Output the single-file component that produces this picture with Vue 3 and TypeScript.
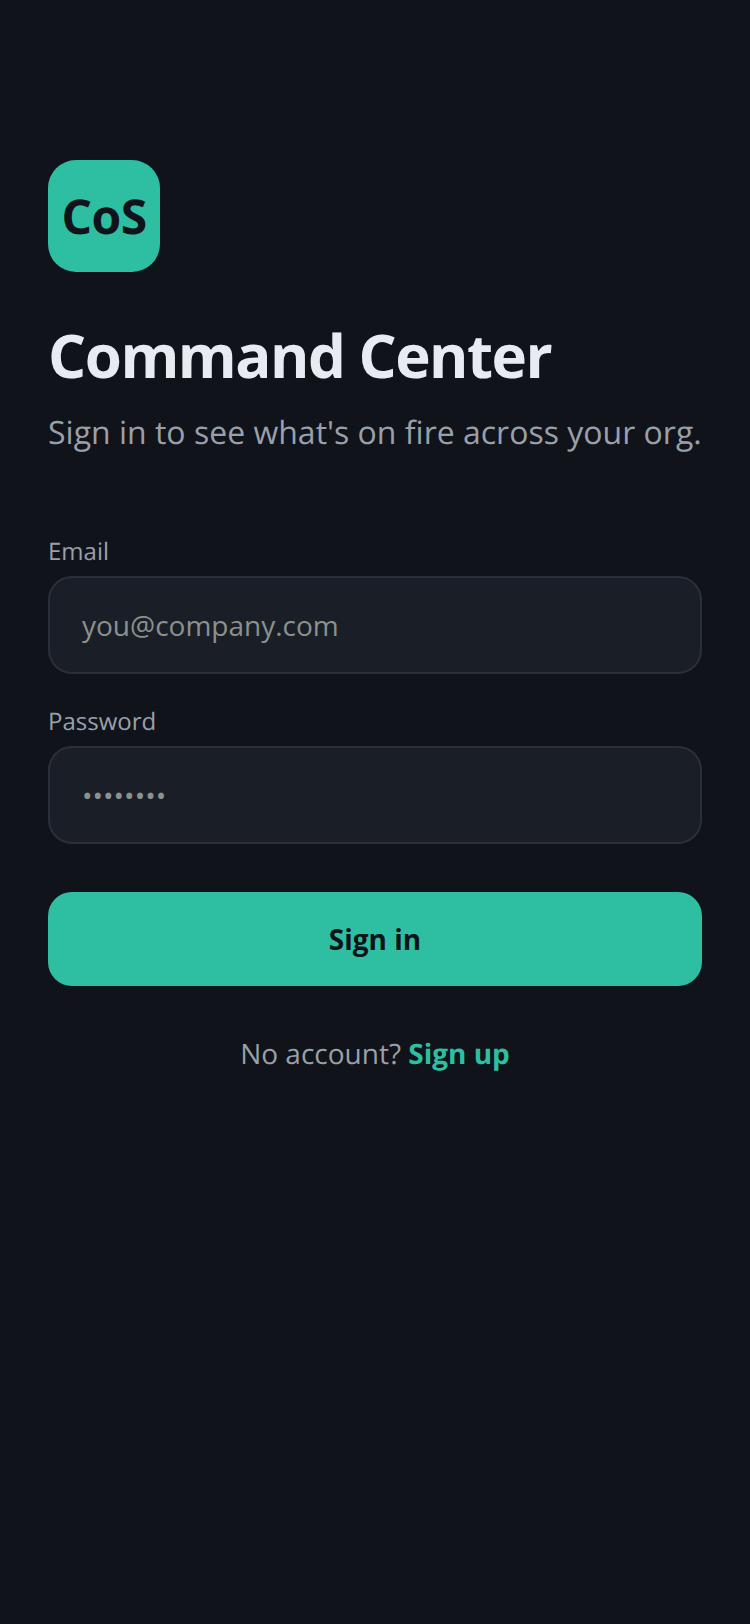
<template>
  <main class="login">
    <div class="logo">CoS</div>
    <h1 class="title">Command Center</h1>
    <p class="subtitle">Sign in to see what's on fire across your org.</p>

    <form class="form" @submit.prevent>
      <label class="field">
        <span class="field-label">Email</span>
        <input class="input" type="email" placeholder="you@company.com" />
      </label>
      <label class="field">
        <span class="field-label">Password</span>
        <input class="input" type="password" placeholder="••••••••" />
      </label>
      <button class="submit" type="submit">Sign in</button>
    </form>

    <p class="switch">No account? <a class="switch-link" href="#">Sign up</a></p>
  </main>
</template>

<script setup lang="ts">
</script>

<style>
html,
body {
  margin: 0;
  background: #10131a;
}
</style>

<style scoped>
.login {
  box-sizing: border-box;
  display: flex;
  flex-direction: column;
  min-height: 1624px;
  padding: 160px 48px 0;
  background: #10131a;
  font-family: "Open Sans", sans-serif;
  text-rendering: geometricPrecision;
}

.logo {
  display: flex;
  align-items: center;
  justify-content: center;
  width: 112px;
  height: 112px;
  border-radius: 28px;
  background: #2ebfa2;
  color: #10131a;
  font-size: 48px;
  font-weight: 700;
  letter-spacing: -0.5px;
}

.title {
  margin: 47px 0 0;
  color: #e8ebf1;
  font-size: 60px;
  font-weight: 700;
  letter-spacing: -1.5px;
  line-height: 72px;
}

.subtitle {
  margin: 20px 0 0;
  color: #9aa0aa;
  font-size: 32px;
  line-height: 44px;
  white-space: nowrap;
}

.form {
  display: flex;
  flex-direction: column;
  margin-top: 81px;
}

.field {
  display: flex;
  flex-direction: column;
  gap: 8px;
  margin-bottom: 32px;
}

.field-label {
  color: #9aa0aa;
  font-size: 24px;
  line-height: 32px;
}

.input {
  box-sizing: border-box;
  width: 100%;
  height: 98px;
  padding: 0 32px;
  border: 2px solid #2a2f3a;
  border-radius: 24px;
  outline: none;
  background: #1a1e26;
  color: #e8ebf1;
  font-family: inherit;
  font-size: 28px;
}

.input::placeholder {
  color: #8a918f;
  opacity: 1;
}

.submit {
  height: 94px;
  margin-top: 16px;
  border: none;
  border-radius: 24px;
  background: #2ebfa2;
  color: #10131a;
  font-family: inherit;
  font-size: 28px;
  font-weight: 700;
}

.switch {
  margin: 48px 0 0;
  color: #9aa0aa;
  font-size: 28px;
  line-height: 40px;
  text-align: center;
}

.switch-link {
  color: #2ebfa2;
  font-weight: 700;
  text-decoration: none;
}
</style>
